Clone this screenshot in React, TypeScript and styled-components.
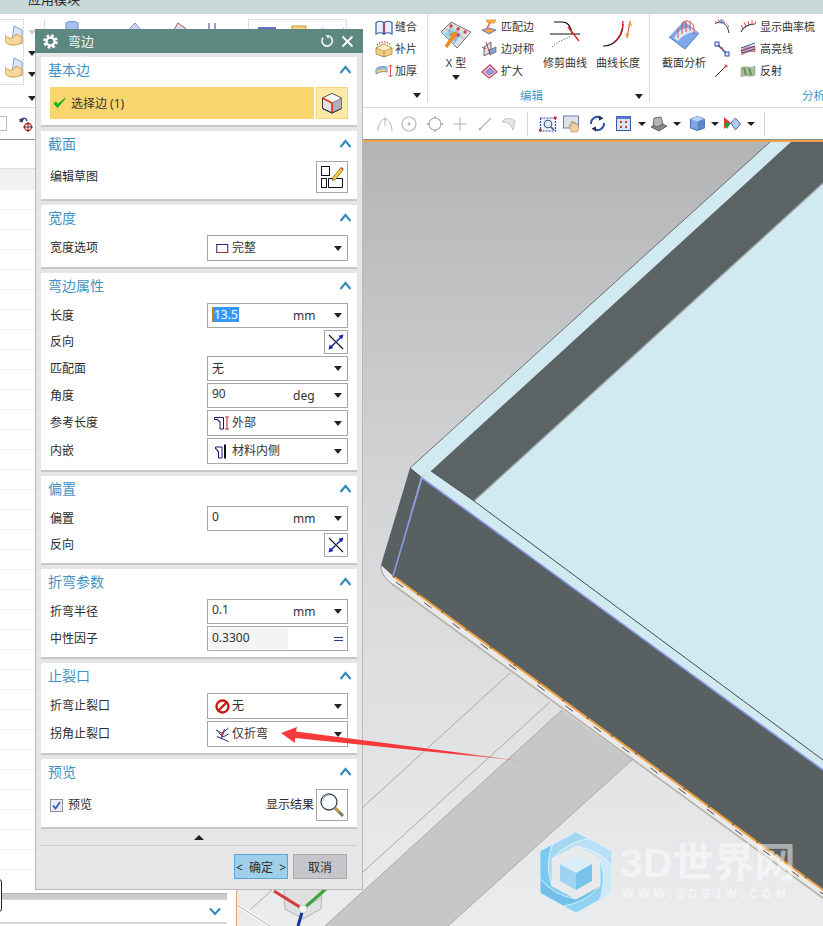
import React from "react";
import styled, { createGlobalStyle } from "styled-components";

const FONT = `"Noto Sans", "Noto Sans CJK SC", sans-serif`;

const Global = createGlobalStyle`
  html, body { margin: 0; padding: 0; background: #fff; }
  body { font-family: ${FONT}; font-size: 12px; color: #2a2a2a; }
  * { box-sizing: border-box; }
`;

const Page = styled.div`
  position: relative; width: 823px; height: 926px; overflow: hidden;
  display: flex; flex-direction: column; background: #fff;
`;
const MenuBar = styled.div`
  height: 14px; flex: none; background: #c8d8d6; overflow: hidden; display: flex; padding-left: 28px;
`;
const MenuItem = styled.span`
  font-size: 13px; line-height: 14px; margin-top: -8px; color: #2b2b2b;
`;
const Ribbon = styled.div`
  height: 94px; flex: none; display: flex; overflow: hidden; background: #fff; border-bottom: 1px solid #dcdcdc;
`;
const RibbonLead = styled.div`
  width: 363px; flex: none; display: flex; padding-top: 5px;
`;
const Gallery = styled.div`
  width: 24px; height: 66px; flex: none; border: 1px solid #dedede; border-left: 0;
  display: flex; flex-direction: column; justify-content: space-around; align-items: flex-end;
`;
const GalleryScroll = styled.div`
  width: 21px; flex: none; height: 88px; border-right: 1px solid #dedede;
  display: flex; flex-direction: column; align-items: center; padding: 11px 4px 0 0; gap: 16px;
  & > i:last-child { margin-top: 3px; }
`;
const PeekIcons = styled.div<{ $w: number; $pl: number; $gaps: number; $boxed?: boolean }>`
  width: ${(p) => p.$w}px; height: ${(p) => (p.$boxed ? 40 : 30)}px; flex: none;
  display: flex; gap: ${(p) => p.$gaps}px; padding: 2px 0 0 ${(p) => p.$pl}px;
  ${(p) => (p.$boxed ? "border: 1px solid #dedede;" : "")}
`;
const RibbonGroup = styled.div<{ $w: number; $end?: boolean }>`
  width: ${(p) => p.$w}px; flex: none; display: flex; flex-direction: column;
  ${(p) => (p.$end ? "" : "border-right: 1px solid #dcdcdc;")}
  margin-bottom: 5px;
`;
const GroupBody = styled.div<{ $pl?: number }>`
  height: 75px; flex: none; display: flex; padding-left: ${(p) => p.$pl ?? 0}px;
`;
const GroupFoot = styled.div<{ $pr?: number; $pl?: number }>`
  flex: 1; display: flex; align-items: center; padding: 0 ${(p) => p.$pr ?? 0}px 0 ${(p) => p.$pl ?? 0}px;
`;
const GroupLabel = styled.div<{ $left?: boolean }>`
  flex: 1; font-size: 11.5px; line-height: 14px; color: #3d97c8; white-space: nowrap;
  text-align: ${(p) => (p.$left ? "left" : "center")};
`;
const SmallCol = styled.div<{ $w?: number; $ml?: number }>`
  display: flex; flex-direction: column; flex: none; padding-top: 2px;
  ${(p) => (p.$w ? `width: ${p.$w}px;` : "")} margin-left: ${(p) => p.$ml ?? 0}px;
`;
const SmallCmd = styled.div<{ $gap?: number }>`
  height: 22px; display: flex; align-items: center; gap: ${(p) => p.$gap ?? 3}px; white-space: nowrap;
  font-size: 11px; line-height: 14px; color: #333;
`;
const BigCmd = styled.div<{ $w: number }>`
  width: ${(p) => p.$w}px; flex: none; display: flex; flex-direction: column; align-items: center; padding-top: 5px;
  font-size: 11px; line-height: 14px; color: #333; white-space: nowrap;
`;
const BigIcon = styled.div`
  height: 30px; flex: none; margin-bottom: 7px; display: flex; align-items: center; justify-content: center;
`;
const Caret = styled.i<{ $c?: string; $mt?: number; $ml?: number; $mr?: number }>`
  display: block; flex: none; width: 0; height: 0; border-style: solid; border-width: 5px 4.5px 0;
  border-color: ${(p) => p.$c ?? "#222"} transparent transparent;
  margin: ${(p) => p.$mt ?? 0}px ${(p) => p.$mr ?? 0}px 0 ${(p) => p.$ml ?? 0}px;
`;
const Toolbar = styled.div`
  height: 32px; flex: none; display: flex; align-items: center; background: #fff;
  border-bottom: 1px solid #8b9192; overflow: hidden;
`;
const ToolLead = styled.div`
  width: 363px; flex: none; display: flex; align-items: center; gap: 12px;
`;
const ToolBox = styled.div`
  width: 7px; height: 15px; flex: none; border: 1px solid #bbb; border-left: 0;
`;
const ToolCell = styled.div<{ $ml: number }>`
  width: 20px; height: 20px; flex: none; margin-left: ${(p) => p.$ml}px;
  display: flex; align-items: center; justify-content: center;
`;
const ToolCaret = styled.div<{ $ml: number }>`
  width: 8px; flex: none; margin-left: ${(p) => p.$ml}px; display: flex; justify-content: center;
  & > i { border-width: 4px 4px 0; }
`;
const ToolSep = styled.div<{ $ml: number }>`
  width: 1px; height: 24px; flex: none; background: #d4d4d4; margin-left: ${(p) => p.$ml}px;
`;
const Main = styled.div`
  flex: 1; min-height: 0; display: flex;
`;
const LeftPanel = styled.div`
  width: 237px; flex: none; padding-right: 9px; border-right: 1px solid #e2a468; display: flex; flex-direction: column; background: #fff;
`;
const HeadGap = styled.div`height: 28px; flex: none;`;
const HeadRow = styled.div`height: 22px; flex: none; background: #f1f1f1; border-top: 1px solid #e0e0e0;`;
const Row = styled.div`height: 20px; flex: none; border-bottom: 1px solid #efefef;`;
const Tail = styled.div`
  flex: 1; display: flex; flex-direction: column; align-items: stretch;
`;
const ScrollTrack = styled.div`
  height: 7px; margin-top: 23px; flex: none; background: #cbcbcb; border-top: 1px solid #b5b5b5; border-bottom: 1px solid #d8d8d8;
`;
const TailChevron = styled.div`
  flex: 1; display: flex; align-items: center; justify-content: flex-end; padding-right: 6px;
`;
const TailLine = styled.div`height: 2px; flex: none; background: #d9d9d9; margin-bottom: 2px;`;
const EdgeTab = styled.div`
  position: absolute; left: -4px; top: 879px; width: 6px; height: 33px; border: 1px solid #222; border-radius: 3px; background: #fff;
`;
const Viewport = styled.div`
  position: relative; flex: 1; min-width: 0; border-top: 2px solid #f0a24a;
  background: linear-gradient(180deg, #b3b4b5 0%, #d4d5d6 45%, #ebecee 100%); overflow: hidden;
`;
const ModelSvg = styled.svg`
  display: block; width: 586px; height: 784px;
`;
const WatermarkTitle = styled.div`
  position: absolute; left: 383px; top: 697px; font-size: 41px; line-height: 48px; font-weight: 700; white-space: nowrap;
  font-family: "Liberation Sans", "Noto Sans CJK SC", sans-serif; color: rgba(255, 255, 255, 0.5);
`;
const WatermarkSub = styled.div`
  position: absolute; left: 385px; top: 745px; font-size: 12px; line-height: 14px; font-weight: 700; letter-spacing: 4.6px; white-space: nowrap;
  font-family: "Liberation Sans", sans-serif; color: rgba(255, 255, 255, 0.55);
`;

/* dialog */
const Dialog = styled.div`
  position: absolute; left: 35px; top: 29px; width: 328px; height: 861px; background: #e6e6e6;
  border: 1px solid #b9b9b9; border-top: 0; display: flex; flex-direction: column;
`;
const DialogHead = styled.div`
  height: 24px; flex: none; margin: 0 -1px; background: #5c8880; display: flex; align-items: center; padding: 0 9px 0 8px; gap: 7px; color: #fff;
`;
const DialogTitle = styled.div`
  flex: 1; margin-left: 3px; font-size: 13px; line-height: 16px; color: #f2f6f5;
`;
const DialogBody = styled.div`
  flex: none; display: flex; flex-direction: column; gap: 4px; padding: 4px 5px 0;
`;
const Section = styled.section`
  background: #fff; border-bottom: 2px solid #c7c7c7; padding: 0 9px 6px;
`;
const SectionHead = styled.div`
  height: 30px; display: flex; align-items: flex-start; justify-content: space-between; margin: 0 -4px 0 -2px; padding-top: 4px;
`;
const SectionTitle = styled.div`
  font-size: 14px; line-height: 18px; color: #3f93c4;
`;
const ChevronSlot = styled.div`margin-top: 4px;`;
const FormRows = styled.div`display: flex; flex-direction: column; gap: 2px;`;
const FormRow = styled.div`
  display: flex; align-items: center; justify-content: space-between; font-size: 12px; line-height: 16px; color: #2c2c2c;
`;
const SelectBox = styled.div<{ $h?: number }>`
  width: 141px; height: ${(p) => p.$h ?? 25}px; flex: none; display: flex; align-items: center; padding-left: 4px;
  border: 1px solid #a6a6a6; background: #fff; font-size: 12px; line-height: 16px; color: #333;
`;
const SelectText = styled.span`
  flex: 1; display: flex; align-items: center; white-space: nowrap; min-width: 0;
`;
const IconSlot = styled.span`
  width: 20px; flex: none; display: flex; justify-content: center; margin-right: 0;
`;
const Num = styled.span`margin-top: -3px;`;
const Unit = styled.span`width: 22px; margin-right: 19px; flex: none; color: #333;`;
const Selected = styled.span`
  background: #3399ff; color: #fff; padding: 0 1px; border-left: 1px solid #d47a10; line-height: 15px; margin-top: -2px;
`;
const ReadOnly = styled.span`
  width: 78px; height: 21px; margin-left: -2px; padding-left: 2px; flex: none; background: #f4f4f4; line-height: 19px; color: #333;
`;
const Equal = styled.span`
  margin-left: auto; margin-right: 4px; width: 9px; height: 4px; border-top: 1.5px solid #223a80; border-bottom: 1.5px solid #223a80;
`;
const IconBtn = styled.div<{ $s: number; $bg?: string; $bd?: string }>`
  width: ${(p) => p.$s}px; height: ${(p) => p.$s}px; flex: none; display: flex; align-items: center; justify-content: center;
  border: 1px solid ${(p) => p.$bd ?? "#a6a6a6"}; background: ${(p) => p.$bg ?? "#fff"};
`;
const SelectBar = styled.div`
  display: flex; justify-content: space-between; align-items: stretch; height: 32px;
`;
const YellowStep = styled.div`
  width: 264px; flex: none; background: #fbd56d; display: flex; align-items: center; gap: 5px; padding-left: 3px; font-size: 12px; color: #333;
`;
const PreviewLeft = styled.div`display: flex; align-items: center; gap: 5px;`;
const PreviewRight = styled.div`display: flex; align-items: center; gap: 2px;`;
const CheckBox = styled.div`
  width: 13px; height: 13px; border: 1px solid #8d8d8d; background: #e8ecf4; display: flex; align-items: center; justify-content: center;
`;
const CollapseRow = styled.div`
  height: 17px; flex: none; margin: 0 5px; display: flex; align-items: center; justify-content: center; border-bottom: 1px solid #cdcdcd;
`;
const CollapseMark = styled.i`
  display: block; width: 0; height: 0; border-style: solid; border-width: 0 5px 5px; border-color: transparent transparent #222;
`;
const DialogFoot = styled.div`
  flex: none; display: flex; justify-content: flex-end; gap: 5px; padding: 8px 15px 0 0;
`;
const DlgButton = styled.div<{ $primary?: boolean }>`
  width: 54px; height: 25px; display: flex; align-items: center; justify-content: center; font-size: 12px; color: #2c2c2c; white-space: pre;
  border: 1px solid ${(p) => (p.$primary ? "#56a6d8" : "#a9a9a9")}; background: ${(p) => (p.$primary ? "#9fcfe9" : "#c6c6ca")};
`;
const ArrowOverlay = styled.svg`
  position: absolute; left: 278px; top: 724px; width: 256px; height: 42px; pointer-events: none;
`;

const Sv = styled.svg`display: block; flex: none;`;
type IP = { s?: number; h?: number; children: React.ReactNode };
const I = ({ s = 16, h, children }: IP) => (
  <Sv width={s} height={h ?? s} viewBox={`0 0 ${s} ${h ?? s}`} fill="none">{children}</Sv>
);

const Chevron = () => (
  <ChevronSlot>
    <I s={13} h={9}><path d="M1.5 8 6.5 2 11.5 8" stroke="#2f8cbf" strokeWidth="2.1" /></I>
  </ChevronSlot>
);
const Gear = () => (
  <I s={15}>
    <circle cx="7.5" cy="7.5" r="6" stroke="#fff" strokeWidth="2.6" strokeDasharray="2.6 2.1" />
    <circle cx="7.5" cy="7.5" r="4" stroke="#fff" strokeWidth="2.4" />
  </I>
);
const Refresh = () => (
  <I s={14}>
    <path d="M9.5 2.2A5.2 5.2 0 1 1 3 3.8" stroke="#f2f6f5" strokeWidth="1.7" />
    <path d="M5.8 1 8.2 5 9.6 1.2Z" fill="#f2f6f5" />
  </I>
);
const Close = () => (
  <I s={13}><path d="M1.5 1.5 11.5 11.5M11.5 1.5 1.5 11.5" stroke="#fff" strokeWidth="1.9" /></I>
);
const CubeEdge = () => (
  <I s={22}>
    <path d="M11 1.5 20.5 6V16.5L11 21 1.5 16.5V6Z" fill="#dfe1e6" stroke="#333" strokeWidth="1" />
    <path d="M11 11 20.5 6V16.5L11 21Z" fill="#aeb1b6" />
    <path d="M1.5 6 11 1.5 20.5 6 11 11Z" fill="#fff" stroke="#555" strokeWidth=".7" />
    <path d="M1.5 16.5 11 21 20.5 16.5" stroke="#333" />
    <path d="M1.5 6 11 11V20" stroke="#e8321a" strokeWidth="1.7" />
  </I>
);
const SketchIco = () => (
  <I s={24}>
    <rect x="1.5" y="1.5" width="8" height="9" stroke="#111" />
    <rect x="1.5" y="13.5" width="5" height="9" stroke="#111" />
    <path d="M8.5 22.5V13.5H22.5V22.5Z" stroke="#111" />
    <path d="M13 12.5 20.5 3l2.5 2-7.5 9.5-3.2 1Z" fill="#f3cf3a" stroke="#6b5310" strokeWidth=".7" />
    <path d="M20.5 3l2.5 2 .8-1.2L21.4 2Z" fill="#e44" />
  </I>
);
const Rect = () => (
  <I s={13} h={11}><rect x=".75" y="1.5" width="11" height="8" stroke="#1c2a78" strokeWidth="1" /><path d="M1 9.5h11" stroke="#a03030" /></I>
);
const Flip = () => (
  <I s={18}>
    <path d="M2 2 16 16" stroke="#111" strokeWidth="1.1" />
    <path d="M9.5 8.5 14.8 3.2" stroke="#1520a8" strokeWidth="1.5" />
    <path d="M16.5 1.5 11.5 2.8 15 6.3Z" fill="#1520a8" />
    <path d="M8.5 9.5 3.2 14.8" stroke="#1520a8" strokeWidth="1.5" />
    <path d="M1.5 16.5 2.8 11.5 6.3 15Z" fill="#1520a8" />
  </I>
);
const OuterRef = () => (
  <I s={16} h={14}>
    <path d="M.5 1.5H9.5V13H6V5H4V3.5H.5Z" fill="#fff" stroke="#141a6c" strokeWidth="1" />
    <path d="M11 1h4M13 1v12M11 13h4" stroke="#c42020" strokeWidth="1" />
  </I>
);
const InnerRef = () => (
  <I s={14} h={15}>
    <path d="M.5 3H7V14H3.5V7H2V5H.5Z" fill="#fff" stroke="#141a6c" strokeWidth="1" />
    <path d="M10 .5V14.5" stroke="#111" strokeWidth="2" />
  </I>
);
const NoEntry = () => (
  <I s={15}>
    <circle cx="7.5" cy="7.5" r="6" stroke="#cc1111" strokeWidth="2.3" />
    <path d="M3.5 11.5 11.5 3.5" stroke="#cc1111" strokeWidth="2.3" />
  </I>
);
const BendOnly = () => (
  <I s={15}>
    <path d="M1 3 7 6.5 13.5 1M2 9.5l11.5 5" stroke="#2c2c86" strokeWidth="1" />
    <path d="M6 12 9.5 2M3.5 5.5 8 10l5.5-3" stroke="#2c2c86" strokeWidth="1" />
    <circle cx="7.5" cy="6.5" r="1.5" fill="#d63a3a" />
  </I>
);
const Check = () => (
  <I s={9}><path d="M1 4.5 3.5 7.5 8 1" stroke="#3a56b0" strokeWidth="1.7" /></I>
);
const GreenCheck = () => (
  <I s={13} h={12}><path d="M1 6.5 4.5 10.5 12 1.5 4.6 7.5 3 5Z" fill="#10c020" stroke="#10a81c" strokeWidth="1" /></I>
);
const Lens = () => (
  <I s={26}>
    <circle cx="10" cy="10" r="8" fill="#f8fbff" stroke="#444" strokeWidth="1.3" />
    <path d="M4 9a6 6 0 0 1 6-6" stroke="#9cc2e8" strokeWidth="1.4" />
    <path d="M16 16 24 24" stroke="#776" strokeWidth="3" />
    <path d="M16 16 20 20" stroke="#c8a030" strokeWidth="2.2" />
  </I>
);

const GallerySurf = () => (
  <I s={18} h={22}>
    <path d="M9 1 17 5V18L7 16Z" fill="#dce6f5" stroke="#7fa0d0" />
    <path d="M0 10C4 15 8 14 11 9L17 12V18C9 21 3 21 0 16Z" fill="#f8d79e" stroke="#d89a44" />
  </I>
);
const Sew = () => (
  <I s={18} h={15}>
    <path d="M1 2.5C4 1 7 1 8.5 2.5V14C7 12.5 4 12.5 1 14Z" fill="#e9f0fa" stroke="#2f5fa8" strokeWidth="1.2" />
    <path d="M17 2.5C14 1 11 1 9.5 2.5V14C11 12.5 14 12.5 17 14Z" fill="#e9f0fa" stroke="#2f5fa8" strokeWidth="1.2" />
    <path d="M9 2V14" stroke="#d44" strokeWidth="1.2" />
  </I>
);
const Patch = () => (
  <I s={18} h={17}>
    <path d="M1 7 9 3 17 7V13L9 16 1 13Z" fill="#f4cf88" stroke="#a8823e" strokeWidth=".8" />
    <path d="M1 7 9 10 17 7 9 3Z" fill="#fff1c8" stroke="#a8823e" strokeWidth=".6" />
    <path d="M2 4C6 0 12 0 16 4" stroke="#e0343a" strokeWidth="1.2" strokeDasharray="1.4 1.2" />
    <path d="M9 10V16" stroke="#a8823e" strokeWidth=".8" />
  </I>
);
const Thicken = () => (
  <I s={18} h={14}>
    <path d="M1 5C4 2 9 2 12 3V8C8 7 4 8 1 10Z" fill="#f3d06a" stroke="#5a7db8" strokeWidth=".8" />
    <path d="M1 5C4 2 9 2 12 3V5.5C8 4.5 4 5.5 1 7.5Z" fill="#8cb4e2" />
    <path d="M15.5 1V13M13.5 3l2-2 2 2M13.5 11l2 2 2-2" stroke="#d44" strokeWidth=".9" />
  </I>
);
const XShape = () => (
  <I s={32} h={29}>
    <path d="M1 12 11 2 31 12 17 28Z" fill="#dde1e4" stroke="#777" strokeWidth="1" />
    <path d="M3 14 12 8 22 14 14 25Z" fill="#9fd4ee" />
    <path d="M11 2 9 16M20 6l-5 16M6 9l19 10" stroke="#8a8a8a" strokeWidth=".6" />
    <circle cx="11" cy="6" r="1.7" fill="#d84040" /><circle cx="18" cy="9" r="1.7" fill="#d84040" />
    <circle cx="25" cy="12" r="1.7" fill="#d84040" /><circle cx="18" cy="15" r="1.7" fill="#d84040" />
    <path d="M6 27 14 15" stroke="#ef8a22" strokeWidth="3.4" />
    <path d="M17 11 9 14 15 20Z" fill="#ef8a22" />
  </I>
);
const MatchEdge = () => (
  <I s={16} h={16}>
    <path d="M5 1H15L13 4H7Z" fill="#f4b24a" stroke="#c47e20" strokeWidth=".6" />
    <path d="M9 4 6 9" stroke="#d44" strokeWidth="1.3" />
    <path d="M1 11 8 9 15 11 8 15Z" fill="#eda24c" stroke="#5b6fc2" strokeWidth=".9" />
  </I>
);
const EdgeSym = () => (
  <I s={16}>
    <path d="M3 6 10 1V11L3 15Z" fill="#dfe2e8" stroke="#555" strokeWidth=".9" />
    <path d="M8 9 15 6V11L9 14Z" fill="#8ba2d8" stroke="#445" strokeWidth=".6" />
    <path d="M1 6 5 8M5 1 9 13" stroke="#a22" strokeWidth=".8" />
  </I>
);
const Expand = () => (
  <I s={17} h={15}>
    <path d="M1 8 9 1 16 8 8 14Z" fill="#f2dce2" stroke="#c64a5a" strokeWidth="1.3" />
    <path d="M4.5 8 9 4 13 8 8 11Z" fill="#9a9fe0" stroke="#5c5cc0" strokeWidth=".8" />
  </I>
);
const TrimCurve = () => (
  <I s={30} h={27}>
    <path d="M4 1H12C18 1 21 5 22 13" stroke="#111" strokeWidth="1.1" />
    <path d="M0 13H30" stroke="#111" strokeWidth="1" />
    <path d="M18 6 29 20" stroke="#e02020" strokeWidth="1.3" />
    <path d="M2 26C8 20 16 18 21 15" stroke="#555" strokeWidth="1" strokeDasharray="1.2 1.6" />
  </I>
);
const CurveLen = () => (
  <I s={30} h={28}>
    <path d="M0 26C12 26 20 16 20 4" stroke="#222" strokeWidth="1.2" />
    <path d="M20 1C20 10 17 18 10 23" stroke="#e02020" strokeWidth="1.3" />
    <path d="M27 1 24 18" stroke="#d63a3a" strokeWidth="1" />
    <path d="M27 1 25 5.5 29 6ZM24 18 22 13.5 26.5 14Z" fill="#ee9a3a" />
  </I>
);
const SectionAn = () => (
  <I s={32} h={32}>
    <path d="M1 19 16 3 31 15 17 31Z" fill="#7ea8e8" />
    <path d="M6 20C12 9 21 7 28 14 22 14 15 17 10 23Z" fill="#dbe6f6" />
    <path d="M1 19 17 31 31 15" stroke="#4a79c8" strokeWidth="1" />
    <path d="M14 16V5C18 1 24 3 26 9V16M18 14V3M22 13V3" stroke="#e24848" strokeWidth="1" />
    <path d="M10 20V10" stroke="#e24848" strokeWidth="1" />
  </I>
);
const Curvy = () => (
  <I s={16}>
    <path d="M1 5C6 1 13 3 15 14" stroke="#333" strokeWidth="1" />
    <path d="M1 3C6 0 14 3 15 9" stroke="#d44" strokeWidth="1" strokeDasharray="1.5 1.5" />
    <rect x="6" y="1" width="3" height="3" stroke="#6070c0" strokeWidth=".8" />
  </I>
);
const Nodes = () => (
  <I s={16} h={16}>
    <rect x="1" y="1" width="4" height="4" fill="#dfe6ff" stroke="#4050a8" />
    <rect x="11" y="11" width="4" height="4" fill="#dfe6ff" stroke="#4050a8" />
    <path d="M4 4 12 12" stroke="#4050a8" strokeWidth="1.6" />
    <path d="M8 6 9 9" stroke="#d44" />
  </I>
);
const Pin = () => (
  <I s={14}><path d="M1 13 12 2" stroke="#333" strokeWidth="1" /><circle cx="12" cy="2" r="1.5" fill="#d44" /></I>
);
const Comb = () => (
  <I s={16} h={14}>
    <path d="M1 12C4 6 9 4 15 4" stroke="#333" strokeWidth="1.1" />
    <path d="M3 9 1 5M6 6.5 4 2M9 5 8 1M12 4.5 12 0M15 4 16 1" stroke="#e04a4a" strokeWidth="1" />
  </I>
);
const Highlight = () => (
  <I s={16} h={15}>
    <path d="M1 8C5 5 11 4 15 5V10C11 9 5 10 2 13Z" fill="#e9a0a8" stroke="#b04a60" strokeWidth=".6" />
    <path d="M1 6 15 1M1 9 15 4" stroke="#33488c" strokeWidth="1" />
    <path d="M2 11 15 7" stroke="#33488c" strokeWidth="1" />
  </I>
);
const Reflect = () => (
  <I s={16} h={13}>
    <path d="M1 3C5 0 11 4 15 1V10C11 13 5 9 1 12Z" fill="#a7c098" stroke="#8ba07e" strokeWidth=".6" />
    <path d="M4 3 6 10M9 3l2 7" stroke="#6c8a60" strokeWidth="2" />
  </I>
);

const G = "#b4b4b4";
const GreyTools = [
  <I key="a"><path d="M1 15C1 8 5 3 8 3s7 5 7 12M8 1V10" stroke={G} strokeWidth="1" /></I>,
  <I key="b"><circle cx="8" cy="8" r="7" stroke={G} strokeWidth="1.2" /><circle cx="8" cy="8" r="1.4" fill={G} /></I>,
  <I key="c"><circle cx="8" cy="8" r="6" stroke={G} strokeWidth="1.2" /><path d="M8 0v3M8 13v3M0 8h3M13 8h3" stroke={G} strokeWidth="1.8" /></I>,
  <I key="d"><path d="M8 1V15M1 8H15" stroke={G} strokeWidth="1.1" /></I>,
  <I key="e"><path d="M2 14 14 2" stroke={G} strokeWidth="1.1" /><circle cx="3" cy="13" r="1.3" fill={G} /></I>,
  <I key="f"><path d="M2 6C5 1 12 2 15 5L13 14C11 8 7 6 2 6Z" fill="#e6e6e6" stroke="#c4c4c4" /></I>,
];
const ZoomFit = () => (
  <I s={18}>
    <rect x="1.5" y="3" width="15" height="13" fill="#eef1f8" stroke="#2e4fb4" strokeWidth="1.2" strokeDasharray="2 1" />
    <circle cx="9" cy="9" r="3.8" fill="#d4ecfa" stroke="#44556a" strokeWidth="1.1" />
    <path d="M12 12 15 15" stroke="#44556a" strokeWidth="1.5" />
    <rect x="15" y="1.5" width="2.5" height="2.5" fill="#d22" />
    <rect x="0" y="14" width="2.5" height="2.5" fill="#d22" />
  </I>
);
const Pan = () => (
  <I s={18}>
    <rect x=".5" y="1" width="15" height="12" fill="#dfe3ec" stroke="#6d7ea8" />
    <path d="M8 17 6 10l2 1V6l1.5 3 .5-3 1.5 3 .5-2 1.5 3 1-1.5L16 13l-2 4Z" fill="#f2cfa0" stroke="#a88858" strokeWidth=".6" />
  </I>
);
const Rotate = () => (
  <I s={17}>
    <path d="M2 9A6.5 6.5 0 0 1 12 3" stroke="#3557a8" strokeWidth="2" />
    <path d="M15 8A6.5 6.5 0 0 1 5 14" stroke="#3557a8" strokeWidth="2" />
    <path d="M10 .5 14.500 3.500 10 5.500ZM7 16.500 2.500 13.500 7 11.500Z" fill="#222a50" />
  </I>
);
const Layout = () => (
  <I s={15}>
    <rect x=".5" y=".5" width="14" height="14" fill="#dbe2f4" stroke="#3a59aa" />
    <rect x=".5" y=".5" width="14" height="2.5" fill="#5b7ccc" />
    <path d="M4 5h2v2H4zM9 5h2v2H9zM4 10h2v2H4zM9 10h2v2H9z" fill="#e03a2e" />
  </I>
);
const Printer = () => (
  <I s={18}>
    <path d="M1 12 9 8 17 11 9 16Z" fill="#8a8a8a" stroke="#333" strokeWidth=".7" />
    <path d="M3 10 4 3 11 2 13 9 7 12Z" fill="#b4b4b4" stroke="#444" strokeWidth=".7" />
  </I>
);
const Cube = () => (
  <I s={15}>
    <path d="M7.5 .5 14.5 3V12L7.5 14.5 .5 12V3Z" fill="#7fa6e0" stroke="#4a6fae" />
    <path d="M.5 3 7.5 5.5 14.5 3 7.5 .5Z" fill="#b8d2f2" />
    <path d="M7.5 5.5V14.5L14.5 12V3Z" fill="#5e86c4" />
  </I>
);
const Diamond = () => (
  <I s={18}>
    <path d="M8 8 12.500 3 17.500 9 12.500 15Z" fill="#b4c8ee" stroke="#4a6fae" />
    <path d="M1 2 8 8 1 14Z" fill="#e03a2e" />
    <path d="M1 8 8 8 4 14Z" fill="#20a040" />
  </I>
);

/* logo blades: six curved sectors of the hexagon */
type Pt = [number, number];
const HEX: Pt[] = [[576, 832], [612, 851], [612, 893], [576, 913], [540, 893], [540, 851]];
const RING: Pt[] = [[576, 846], [600, 859], [600, 886], [576, 899], [552, 886], [552, 859]];
const BLADE = ["#cfe8f6", "#8fd2f3", "#73bfe7", "#79c9f1", "#a4d6f2", "#b8dff5"];
const lerp = (a: Pt, b: Pt, t: number): Pt => [a[0] + (b[0] - a[0]) * t, a[1] + (b[1] - a[1]) * t];
const bladeEnd = (k: number) => lerp(HEX[(k + 1) % 6], HEX[(k + 2) % 6], 0.35);
const bladeCtl = (k: number) => lerp(RING[k], HEX[(k + 1) % 6], 0.62);
const bladePath = (k: number) => {
  const n = (k + 1) % 6;
  const s = bladeEnd(k);
  const e = bladeEnd(n);
  const c = bladeCtl(n);
  return `M${RING[k]} Q${bladeCtl(k)} ${s} L${HEX[n === 5 ? 0 : n + 1]} L${e} Q${c} ${RING[n]} Z`;
};

const rows = Array.from({ length: 34 }, (_, i) => i);

export default function App() {
  return (
    <Page>
      <Global />
      <MenuBar><MenuItem>应用模块</MenuItem></MenuBar>
      <Ribbon>
        <RibbonLead>
          <Gallery><GallerySurf /><GallerySurf /></Gallery>
          <GalleryScroll>
            <Caret $c="#cfcfcf" /><Caret /><Caret /><Caret />
          </GalleryScroll>
          <PeekIcons $w={100} $pl={20} $gaps={44}>
            <I s={14} h={18}><path d="M1 2C3 0 11 0 13 2V16H1Z" fill="#a9c0ea" stroke="#6d8bc8" /></I>
            <I s={20} h={14}><path d="M2 12 12 2 19 10Z" fill="#cbd0ee" stroke="#8a90d0" /></I>
          </PeekIcons>
          <PeekIcons $w={103} $pl={25} $gaps={17}>
            <I s={20} h={14}><path d="M2 12 8 2 19 10Z" fill="#dde0f2" stroke="#c05050" /></I>
            <I s={10} h={10}><path d="M2 8V2M8 8V2" stroke="#3a3a90" /></I>
          </PeekIcons>
          <PeekIcons $w={99} $pl={8} $gaps={14} $boxed>
            <I s={20} h={14}><rect x="1" y="5" width="18" height="9" fill="#f3e0d0" /><rect x="1" y="5" width="18" height="3" fill="#6a6ac8" /></I>
            <I s={16} h={14}><rect x="1" y="4" width="14" height="10" fill="#f3d27a" stroke="#c49a3a" /></I>
            <I s={24} h={14}><path d="M1 6 12 13 23 6 23 14H1Z" fill="#e96a4a" /></I>
          </PeekIcons>
        </RibbonLead>
        <RibbonGroup $w={65}>
          <GroupBody $pl={12}>
            <SmallCol>
              <SmallCmd $gap={2}><Sew />缝合</SmallCmd>
              <SmallCmd $gap={2}><Patch />补片</SmallCmd>
              <SmallCmd $gap={2}><Thicken />加厚</SmallCmd>
            </SmallCol>
          </GroupBody>
          <GroupFoot $pr={6}><GroupLabel /><Caret /></GroupFoot>
        </RibbonGroup>
        <RibbonGroup $w={222}>
          <GroupBody>
            <BigCmd $w={56}><BigIcon><XShape /></BigIcon>X 型<Caret $mt={5} /></BigCmd>
            <SmallCol $w={57} $ml={-3}>
              <SmallCmd $gap={4}><MatchEdge />匹配边</SmallCmd>
              <SmallCmd $gap={4}><EdgeSym />边对称</SmallCmd>
              <SmallCmd $gap={3}><Expand />扩大</SmallCmd>
            </SmallCol>
            <BigCmd $w={54}><BigIcon><TrimCurve /></BigIcon>修剪曲线</BigCmd>
            <BigCmd $w={52}><BigIcon><CurveLen /></BigIcon>曲线长度</BigCmd>
          </GroupBody>
          <GroupFoot $pr={6}><GroupLabel>编辑</GroupLabel><Caret /></GroupFoot>
        </RibbonGroup>
        <RibbonGroup $w={173} $end>
          <GroupBody $pl={4}>
            <BigCmd $w={60}><BigIcon><SectionAn /></BigIcon>截面分析</BigCmd>
            <SmallCol $w={26}>
              <SmallCmd><Curvy /></SmallCmd>
              <SmallCmd><Nodes /></SmallCmd>
              <SmallCmd><Pin /></SmallCmd>
            </SmallCol>
            <SmallCol>
              <SmallCmd $gap={4}><Comb />显示曲率梳</SmallCmd>
              <SmallCmd $gap={4}><Highlight />高亮线</SmallCmd>
              <SmallCmd $gap={4}><Reflect />反射</SmallCmd>
            </SmallCol>
          </GroupBody>
          <GroupFoot $pl={152}><GroupLabel $left>分析</GroupLabel></GroupFoot>
        </RibbonGroup>
      </Ribbon>
      <Toolbar>
        <ToolLead>
          <ToolBox />
          <I>
            <path d="M1 6C2 1 7 1 8 5" stroke="#3a3a70" strokeWidth="1.4" />
            <path d="M0 3 3 7 5 3Z" fill="#3a3a70" />
            <circle cx="9" cy="11" r="3.5" stroke="#d22" strokeWidth="1.3" />
            <path d="M9 6V16M4 11H14" stroke="#111" strokeWidth=".8" />
          </I>
        </ToolLead>
        {GreyTools.map((t, i) => (
          <ToolCell key={i} $ml={[12, 4, 6, 5, 5, 3][i]}>{t}</ToolCell>
        ))}
        <ToolSep $ml={9} />
        <ToolCell $ml={10}><ZoomFit /></ToolCell>
        <ToolCell $ml={4}><Pan /></ToolCell>
        <ToolCell $ml={5}><Rotate /></ToolCell>
        <ToolCell $ml={6}><Layout /></ToolCell>
        <ToolCaret $ml={5}><Caret /></ToolCaret>
        <ToolCell $ml={3}><Printer /></ToolCell>
        <ToolCaret $ml={4}><Caret /></ToolCaret>
        <ToolCell $ml={6}><Cube /></ToolCell>
        <ToolCaret $ml={4}><Caret /></ToolCaret>
        <ToolCell $ml={3}><Diamond /></ToolCell>
        <ToolCaret $ml={5}><Caret /></ToolCaret>
        <ToolSep $ml={9} />
      </Toolbar>
      <Main>
        <LeftPanel>
          <HeadGap />
          <HeadRow />
          {rows.map((r) => <Row key={r} />)}
          <Tail>
            <ScrollTrack />
            <TailChevron>
              <I s={12} h={9}><path d="M1 1.5 6 7 11 1.5" stroke="#2f8cbf" strokeWidth="2.1" /></I>
            </TailChevron>
            <TailLine />
          </Tail>
        </LeftPanel>
        <Viewport>
          <ModelSvg viewBox="237 142 586 784" fill="none">
            <path d="M562 710 632 760 448 926H325Z" fill="#c6c7c8" />
            <path d="M510 673 250 910M550 702 363 872M562 710 325 926M632 760 448 926" stroke="#a8a9aa" strokeWidth="1" />
            <path d="M381 565C381 574 386 579 392 584L823 898V890L393 576Z" fill="#eaeaec" />
            <path d="M381 565C381 574 386 579 392 584" stroke="#9a9a9a" strokeWidth="1" />
            <path d="M392 584 823 898" stroke="#b5b2a0" strokeWidth="1.6" />
            <path d="M396 582 823 894" stroke="#222" strokeWidth=".8" strokeDasharray="9 26" />
            <path d="M823 183V760L474 501Z" fill="#d1e9f1" />
            <path d="M410 468 770 142H791L431 471 421 477Z" fill="#d1e9f1" />
            <path d="M431 471 791 142H823V183L474 501Z" fill="#5b6365" />
            <path d="M431 471 474 501 823 760V770L422 478Z" fill="#d1e9f1" />
            <path d="M410 468 421 477 393 576 381 565Z" fill="#586062" />
            <path d="M422 478 823 770V890L393 576Z" fill="#586062" />
            <path d="M410 468 770 142" stroke="#555" strokeWidth=".8" />
            <path d="M474 501 823 183" stroke="#9ea3a5" strokeWidth="1.3" />
            <path d="M474 501 823 760" stroke="#222" strokeWidth=".8" />
            <path d="M431 471 474 501" stroke="#333" strokeWidth=".8" />
            <path d="M410 468 421 477" stroke="#333" strokeWidth=".8" />
            <path d="M393 576 422 478 823 770" stroke="#8a96e6" strokeWidth="1.6" />
            <path d="M393 576 823 890" stroke="#f0a040" strokeWidth="2" />
            <path d="M393 576 823 890" stroke="#8a6a3a" strokeWidth="2" strokeDasharray="2 28" />

            <path d="M237 905 270 926" stroke="#f6f6f7" strokeWidth="4" />
            <path d="M237 905 270 926" stroke="#a8a9aa" strokeWidth=".8" />
            <path d="M284 890 303 880 322 890 321 909 303 919 285 909Z" fill="#d9dcdb" fillOpacity=".7" stroke="#b2b5b4" strokeWidth="1" />
            <path d="M285 896 303 909 322 897" stroke="#b2b5b4" strokeWidth=".8" />
            <path d="M274 891 303 909" stroke="#d63a3a" strokeWidth="3" />
            <path d="M303 909 326 889" stroke="#3aa63a" strokeWidth="3" />
            <path d="M303 909 298 926" stroke="#1530a0" strokeWidth="3" />
            <circle cx="303" cy="909" r="4" fill="#f4f4f4" stroke="#bbb" strokeWidth=".6" />

            <path d="M576 832 612 851V893L576 913 540 893V851Z" fill="#a4d6f2" />
            {BLADE.map((c, k) => (
              <path key={k} d={bladePath(k)} fill={c} stroke="#eaf5fb" strokeWidth=".7" />
            ))}
            <path d="M576 846 600 859V886L576 899 552 886V859Z" fill="#e9eaec" />
            <path d="M576 855 592 864 576 873 560 864Z" fill="#d8eef9" />
            <path d="M560 864 576 873V890L560 881Z" fill="#a0d3f2" />
            <path d="M592 864 576 873V890L592 881Z" fill="#78c3ea" />
          </ModelSvg>
          <WatermarkTitle>3D世界网</WatermarkTitle>
          <WatermarkSub>WWW.3DSJW.COM</WatermarkSub>
        </Viewport>
      </Main>
      <EdgeTab />

      <Dialog>
        <DialogHead>
          <Gear />
          <DialogTitle>弯边</DialogTitle>
          <Refresh />
          <Close />
        </DialogHead>
        <DialogBody>
          <Section>
            <SectionHead><SectionTitle>基本边</SectionTitle><Chevron /></SectionHead>
            <SelectBar>
              <YellowStep><GreenCheck />选择边 (1)</YellowStep>
              <IconBtn $s={32} $bg="#fbe9a8" $bd="#f6d57a"><CubeEdge /></IconBtn>
            </SelectBar>
          </Section>
          <Section>
            <SectionHead><SectionTitle>截面</SectionTitle><Chevron /></SectionHead>
            <FormRow>编辑草图<IconBtn $s={32}><SketchIco /></IconBtn></FormRow>
          </Section>
          <Section>
            <SectionHead><SectionTitle>宽度</SectionTitle><Chevron /></SectionHead>
            <FormRow>宽度选项
              <SelectBox $h={26}><SelectText><IconSlot><Rect /></IconSlot>完整</SelectText><Caret $mr={5} /></SelectBox>
            </FormRow>
          </Section>
          <Section>
            <SectionHead><SectionTitle>弯边属性</SectionTitle><Chevron /></SectionHead>
            <FormRows>
              <FormRow>长度<SelectBox><SelectText><Selected>13.5</Selected></SelectText><Unit>mm</Unit><Caret $mr={5} /></SelectBox></FormRow>
              <FormRow>反向<IconBtn $s={24}><Flip /></IconBtn></FormRow>
              <FormRow>匹配面<SelectBox><SelectText>无</SelectText><Caret $mr={5} /></SelectBox></FormRow>
              <FormRow>角度<SelectBox><SelectText><Num>90</Num></SelectText><Unit>deg</Unit><Caret $mr={5} /></SelectBox></FormRow>
              <FormRow>参考长度<SelectBox $h={26}><SelectText><IconSlot><OuterRef /></IconSlot>外部</SelectText><Caret $mr={5} /></SelectBox></FormRow>
              <FormRow>内嵌<SelectBox $h={26}><SelectText><IconSlot><InnerRef /></IconSlot>材料内侧</SelectText><Caret $mr={5} /></SelectBox></FormRow>
            </FormRows>
          </Section>
          <Section>
            <SectionHead><SectionTitle>偏置</SectionTitle><Chevron /></SectionHead>
            <FormRows>
              <FormRow>偏置<SelectBox><SelectText><Num>0</Num></SelectText><Unit>mm</Unit><Caret $mr={5} /></SelectBox></FormRow>
              <FormRow>反向<IconBtn $s={24}><Flip /></IconBtn></FormRow>
            </FormRows>
          </Section>
          <Section>
            <SectionHead><SectionTitle>折弯参数</SectionTitle><Chevron /></SectionHead>
            <FormRows>
              <FormRow>折弯半径<SelectBox><SelectText><Num>0.1</Num></SelectText><Unit>mm</Unit><Caret $mr={5} /></SelectBox></FormRow>
              <FormRow>中性因子<SelectBox><ReadOnly>0.3300</ReadOnly><Equal /></SelectBox></FormRow>
            </FormRows>
          </Section>
          <Section>
            <SectionHead><SectionTitle>止裂口</SectionTitle><Chevron /></SectionHead>
            <FormRows>
              <FormRow>折弯止裂口<SelectBox $h={26}><SelectText><IconSlot><NoEntry /></IconSlot>无</SelectText><Caret $mr={5} /></SelectBox></FormRow>
              <FormRow>拐角止裂口<SelectBox $h={26}><SelectText><IconSlot><BendOnly /></IconSlot>仅折弯</SelectText><Caret $mr={5} /></SelectBox></FormRow>
            </FormRows>
          </Section>
          <Section>
            <SectionHead><SectionTitle>预览</SectionTitle><Chevron /></SectionHead>
            <FormRow>
              <PreviewLeft><CheckBox><Check /></CheckBox>预览</PreviewLeft>
              <PreviewRight>显示结果<IconBtn $s={32}><Lens /></IconBtn></PreviewRight>
            </FormRow>
          </Section>
        </DialogBody>
        <CollapseRow><CollapseMark /></CollapseRow>
        <DialogFoot>
          <DlgButton $primary>{"<  确定  >"}</DlgButton>
          <DlgButton>取消</DlgButton>
        </DialogFoot>
      </Dialog>

      <ArrowOverlay viewBox="278 724 256 42">
        <defs>
          <linearGradient id="arrowFade" x1="0" x2="1" y1="0" y2="0">
            <stop offset="0" stopColor="#f5393c" />
            <stop offset=".7" stopColor="#f5393c" />
            <stop offset="1" stopColor="#f5393c" stopOpacity=".1" />
          </linearGradient>
        </defs>
        <path d="M281 733 297 727 296 731.5 532 762 295 738 295 743Z" fill="url(#arrowFade)" />
      </ArrowOverlay>
    </Page>
  );
}
